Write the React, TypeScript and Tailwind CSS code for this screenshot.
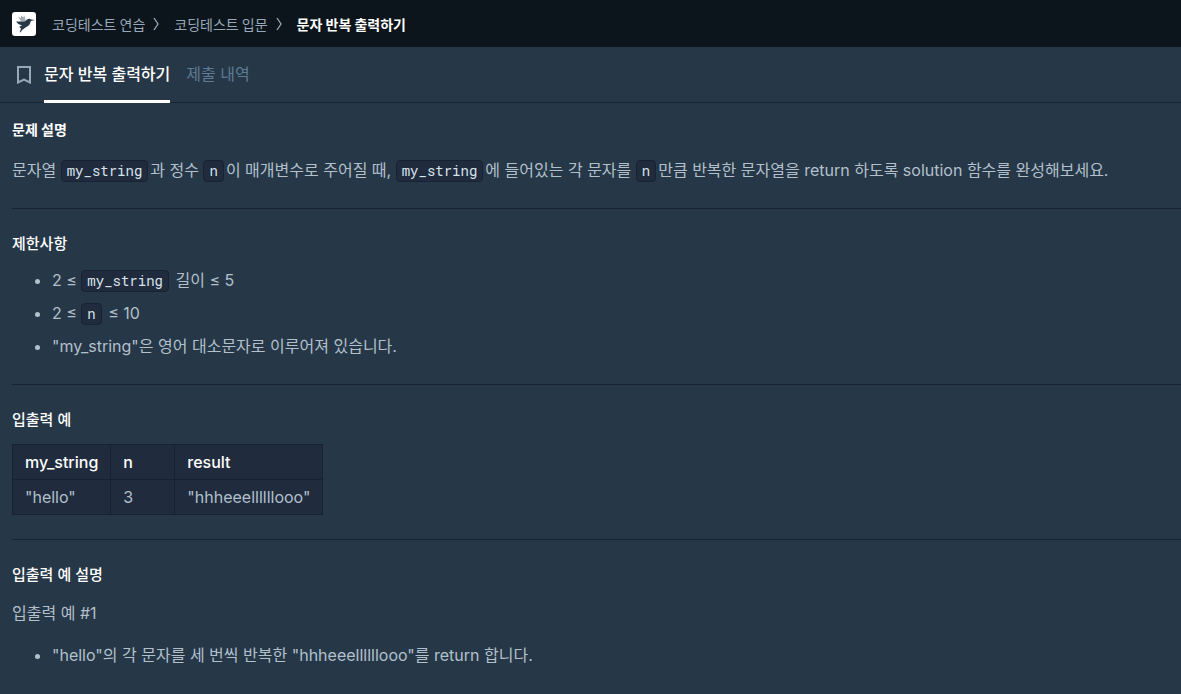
import type { ReactNode } from 'react';

interface Example {
    myString: string;
    n: number;
    result: string;
}

const breadcrumbs = ['코딩테스트 연습', '코딩테스트 입문'];

const examples: Example[] = [
    { myString: '"hello"', n: 3, result: '"hhheeellllllooo"' },
];

const Code = ({ children }: { children: ReactNode }) => (
    <code className="mr-0.5 inline-block rounded border border-[#172334] bg-[#202b3d] px-[5px] font-['Hack','Roboto_Mono','Noto_Sans_Mono','DejaVu_Sans_Mono',monospace] text-sm leading-5 text-[#d7e2eb]">
        {children}
    </code>
);

const SectionTitle = ({ children }: { children: ReactNode }) => (
    <h3 className="text-[15px] leading-5 font-medium text-white">{children}</h3>
);

const Divider = () => <hr className="mt-6 mb-[25px] border-t border-[#172334]" />;

const Logo = () => (
    <a href="#" aria-label="홈" className="block size-6 rounded-[3px] bg-white">
        <svg viewBox="0 0 24 24" className="size-6">
            <path
                d="M6 4.5 9 6 9 3.5 11.5 5.5 12 3 13.5 7.5 13 9.5 9 9.5Z"
                fill="#a5abb5"
            />
            <path
                d="M4 9.5 12.5 9.6 15.5 7.2Q17.5 6.2 19 7.6L23 8 18.8 9Q18.2 13.5 13.5 15.5 10.5 17 8.5 20.5L7.8 20 9 16.6 7.2 14.8 10 13.5Q6 12.8 4 9.5Z"
                fill="#263747"
            />
        </svg>
    </a>
);

const Header = () => (
    <header className="flex h-[47px] items-center bg-[#0c151c] px-3">
        <Logo />
        <nav className="ml-4 flex items-center font-['Noto_Sans_CJK_KR',sans-serif] text-sm leading-5 text-[#98a8b9]">
            {breadcrumbs.map((item) => (
                <div key={item} className="flex items-center">
                    <a href="#">{item}</a>
                    <svg
                        viewBox="0 0 6 14"
                        className="mr-[15px] ml-2 h-3.5 w-1.5"
                        fill="none"
                        stroke="currentColor"
                        strokeWidth="1.3"
                    >
                        <path d="M1 1 5 7 1 13" />
                    </svg>
                </div>
            ))}
            <span className="font-bold text-white">문자 반복 출력하기</span>
        </nav>
    </header>
);

const Tabs = () => (
    <div className="flex h-14 border-b border-[#172334] pl-3">
        <button aria-label="북마크" className="flex w-6 items-center justify-center text-[#98a8b9]">
            <svg
                viewBox="0 0 14 18"
                className="h-[18px] w-3.5"
                fill="none"
                stroke="currentColor"
                strokeWidth="2"
            >
                <path d="M1 1H13V16.5L7 13.5 1 16.5Z" />
            </svg>
        </button>
        <nav className="-mb-px ml-2 flex gap-4 text-base leading-6">
            <a href="#" className="border-b-3 border-white pt-[15px] font-medium text-white">
                문자 반복 출력하기
            </a>
            <a href="#" className="pt-[15px] text-[#5f7b91]">
                제출 내역
            </a>
        </nav>
    </div>
);

const App = () => (
    <div className="min-h-screen bg-[#263747] font-['Inter','Noto_Sans_CJK_KR',sans-serif] text-[#b2c0cc]">
        <Header />
        <Tabs />
        <main className="pt-[17px] pl-3 text-base leading-7">
            <section>
                <h2 className="text-sm leading-5 font-bold text-white">문제 설명</h2>
                <p className="mt-4">
                    문자열 <Code>my_string</Code>과 정수 <Code>n</Code>이 매개변수로
                    주어질 때, <Code>my_string</Code>에 들어있는 각 문자를{' '}
                    <Code>n</Code>만큼 반복한 문자열을 return 하도록 solution 함수를
                    완성해보세요.
                </p>
            </section>
            <Divider />
            <section>
                <SectionTitle>제한사항</SectionTitle>
                <ul className="mt-3 list-disc space-y-[5px] pl-10">
                    <li>
                        2 ≤ <Code>my_string</Code> 길이 ≤ 5
                    </li>
                    <li>
                        2 ≤ <Code>n</Code> ≤ 10
                    </li>
                    <li>"my_string"은 영어 대소문자로 이루어져 있습니다.</li>
                </ul>
            </section>
            <Divider />
            <section>
                <SectionTitle>입출력 예</SectionTitle>
                <table className="mt-3.5 border-collapse bg-[#202b3d] text-left leading-6">
                    <thead className="text-white">
                        <tr>
                            <th className="border border-[#172334] px-3 py-[5px] font-medium">
                                my_string
                            </th>
                            <th className="w-16 border border-[#172334] px-3 py-[5px] font-medium">
                                n
                            </th>
                            <th className="border border-[#172334] px-3 py-[5px] font-medium">
                                result
                            </th>
                        </tr>
                    </thead>
                    <tbody>
                        {examples.map((row) => (
                            <tr key={row.myString}>
                                <td className="border border-[#172334] px-3 py-[5px]">
                                    {row.myString}
                                </td>
                                <td className="border border-[#172334] px-3 py-[5px]">
                                    {row.n}
                                </td>
                                <td className="border border-[#172334] px-3 py-[5px]">
                                    {row.result}
                                </td>
                            </tr>
                        ))}
                    </tbody>
                </table>
            </section>
            <Divider />
            <section>
                <SectionTitle>입출력 예 설명</SectionTitle>
                <p className="mt-3.5">입출력 예 #1</p>
                <ul className="mt-3.5 list-disc pl-10">
                    <li>
                        "hello"의 각 문자를 세 번씩 반복한 "hhheeellllllooo"를 return
                        합니다.
                    </li>
                </ul>
            </section>
        </main>
    </div>
);

export default App;
